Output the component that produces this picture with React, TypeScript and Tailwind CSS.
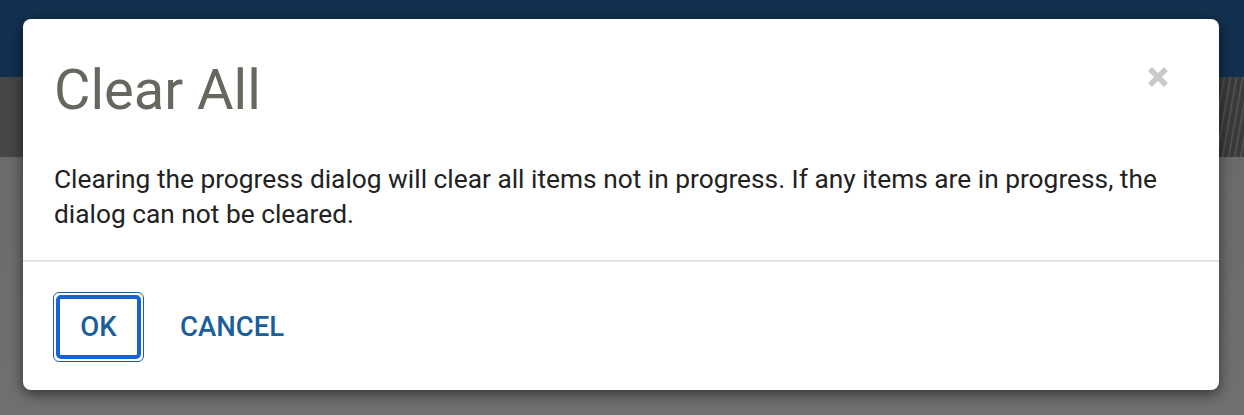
import React from "react";

const font = { fontFamily: "Roboto, 'Liberation Sans', sans-serif" };

export default function App() {
  return (
    <div className="relative h-[415px] w-[1244px] overflow-hidden" style={font}>
      {/* page behind the overlay */}
      <div className="flex h-full flex-col">
        <div className="h-[77px] bg-[#12304f]" />
        <div className="flex h-[80px] bg-[#474645]">
          <div className="flex-1" />
          <div className="w-[30px] bg-[repeating-linear-gradient(100deg,#3a3a3a_0px,#3a3a3a_3px,#555_4px,#3a3a3a_6px)]" />
        </div>
        <div className="flex-1 bg-gradient-to-b from-[#6b6b6b] to-[#707070]" />
      </div>

      {/* modal */}
      <div className="absolute left-[23px] top-[19px] flex h-[371px] w-[1196px] flex-col rounded-[8px] bg-white shadow-[0_4px_14px_rgba(0,0,0,0.55)]">
        <div className="flex items-start justify-between pl-[31px] pr-[50px] pt-[37px]">
          <h1 className="text-[56px] leading-[68px] text-[#68675f]">Clear All</h1>
          <button className="mt-[10px] text-[#c9c9c9]" aria-label="Close">
            <svg width="22" height="22" viewBox="0 0 22 22">
              <path d="M3 3 L19 19 M19 3 L3 19" stroke="currentColor" strokeWidth="5.5" />
            </svg>
          </button>
        </div>
        <p className="mt-[38px] px-[31px] text-[26.3px] leading-[35px] text-[#222]">
          Clearing the progress dialog will clear all items not in progress. If any items are in progress, the
          dialog can not be cleared.
        </p>
        <div className="mt-[28px] h-[2px] bg-[#e3e3e3]" />
        <div className="flex items-center gap-[36px] px-[30px] pt-[30px]">
          <div className="rounded-[6px] border border-[#1a5f9c] p-[2px]">
            <button className="h-[64px] w-[85px] rounded-[5px] border-[4px] border-[#1763d6] text-[27.5px] font-medium text-[#1a5f9b]">
              OK
            </button>
          </div>
          <button className="text-[27.5px] font-medium text-[#1a5f9b]">CANCEL</button>
        </div>
      </div>
    </div>
  );
}
